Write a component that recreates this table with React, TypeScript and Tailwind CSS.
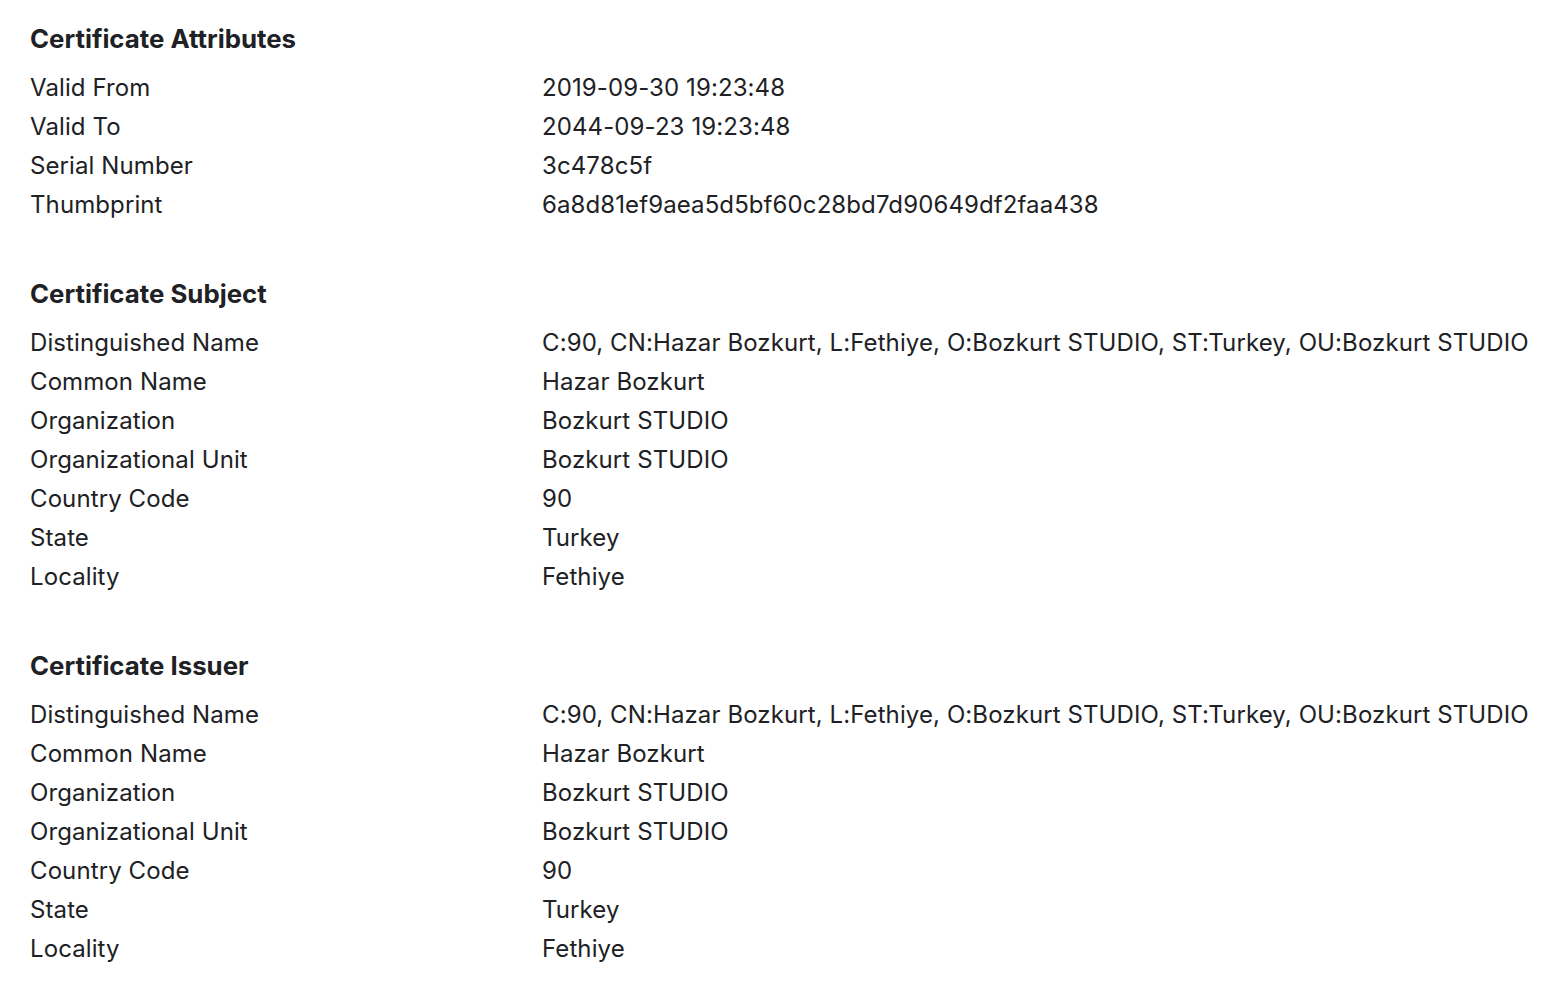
import React from "react";

const subject = [
  ["Distinguished Name", "C:90, CN:Hazar Bozkurt, L:Fethiye, O:Bozkurt STUDIO, ST:Turkey, OU:Bozkurt STUDIO"],
  ["Common Name", "Hazar Bozkurt"],
  ["Organization", "Bozkurt STUDIO"],
  ["Organizational Unit", "Bozkurt STUDIO"],
  ["Country Code", "90"],
  ["State", "Turkey"],
  ["Locality", "Fethiye"],
];

const sections = [
  {
    title: "Certificate Attributes",
    rows: [
      ["Valid From", "2019-09-30 19:23:48"],
      ["Valid To", "2044-09-23 19:23:48"],
      ["Serial Number", "3c478c5f"],
      ["Thumbprint", "6a8d81ef9aea5d5bf60c28bd7d90649df2faa438"],
    ],
  },
  { title: "Certificate Subject", rows: subject },
  { title: "Certificate Issuer", rows: subject },
];

const App = () => {
  return (
    <div
      className="min-h-screen bg-white text-[#202124] pl-[30px] pt-[19px]"
      style={{ fontFamily: "Inter, 'Noto Sans', sans-serif" }}
    >
      {sections.map((s, i) => (
        <div key={i} className={i > 0 ? "mt-[50px]" : ""}>
          <h2 className="text-[25.8px] leading-[39px] font-bold mb-[10px]">
            {s.title}
          </h2>
          <div className="grid grid-cols-[512px_1fr] tracking-[0.1px]">
            {s.rows.map(([k, v], j) => (
              <React.Fragment key={j}>
                <div className="text-[24px] leading-[39px]">{k}</div>
                <div className="text-[24px] leading-[39px] whitespace-nowrap">{v}</div>
              </React.Fragment>
            ))}
          </div>
        </div>
      ))}
    </div>
  );
};

export default App;
